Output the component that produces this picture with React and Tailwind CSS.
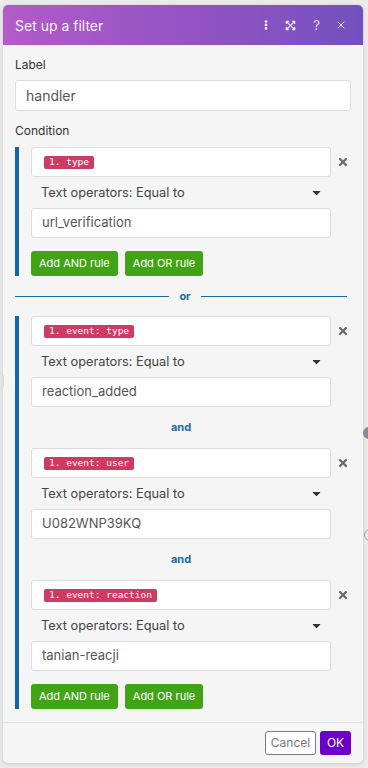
import React from "react";
import { FaEllipsisV, FaExpandArrowsAlt, FaTimes, FaCaretDown } from "react-icons/fa";
import { X } from "lucide-react";

function Tag({ children }) {
  return (
    <span className="inline-flex items-center h-[13px] px-[5px] rounded-[2px] bg-[#cf3a63] text-white text-[9.5px] leading-none" style={{ fontFamily: '"DejaVu Sans Mono", monospace' }}>
      {children}
    </span>
  );
}

function Rule({ tag, value }) {
  return (
    <div className="flex flex-col">
      <div className="flex items-center">
        <div className="w-[300px] h-[30px] bg-white border border-[#dcdcdc] rounded-[3px] flex items-center pl-[12px]">
          <Tag>{tag}</Tag>
        </div>
        <div className="flex-1 flex justify-end pr-[2px] text-[#6b6b6b]">
          <FaTimes size={12} />
        </div>
      </div>
      <div className="w-[300px] h-[31px] flex items-center justify-between pl-[10px] pr-[8px] text-[12.8px] text-[#444]">
        <span>Text operators: Equal to</span>
        <FaCaretDown size={13} className="text-[#333]" />
      </div>
      <div className="w-[300px] h-[30px] bg-white border border-[#dcdcdc] rounded-[3px] flex items-center pl-[10px] text-[13px] text-[#555]">
        {value}
      </div>
    </div>
  );
}

function And() {
  return (
    <div className="w-[300px] h-[41px] flex items-center justify-center text-[11px] font-bold text-[#1b6aa8]">and</div>
  );
}

function Buttons() {
  return (
    <div className="flex gap-[7px] mt-[13px]">
      <button className="h-[25px] px-[8px] rounded-[3px] bg-[#41a316] text-white text-[11px]">Add AND rule</button>
      <button className="h-[25px] px-[8px] rounded-[3px] bg-[#41a316] text-white text-[11px]">Add OR rule</button>
    </div>
  );
}

export default function App() {
  return (
    <div className="relative w-[368px] h-[768px] bg-[#ebebeb] overflow-hidden" style={{ fontFamily: 'Inter, "Noto Sans", sans-serif' }}>
      <div className="absolute left-[-6px] top-[372px] w-[10px] h-[18px] rounded-full border border-[#d6e6bc]" />
      <div className="absolute left-[363px] top-[427px] w-[12px] h-[12px] rounded-full bg-[#8c8696]" />
      <div className="absolute left-[364px] top-[529px] w-[12px] h-[12px] rounded-full border border-[#a0a0a0]" />
      <div className="ml-[3px] pt-[5px]">
        <div className="w-[360px] bg-[#f5f5f5] rounded-[5px] overflow-hidden shadow-[0_1px_4px_rgba(0,0,0,0.15)]">
          <div className="h-[40px] flex items-center justify-between pl-[12px] pr-[16px] bg-gradient-to-r from-[#b25bc9] via-[#9553c4] to-[#7350be] text-white">
            <span className="text-[14px] text-white/95">Set up a filter</span>
            <div className="flex items-center text-white/85">
              <FaEllipsisV size={10} />
              <span className="ml-[14px]"><FaExpandArrowsAlt size={11} /></span>
              <span className="ml-[17px] text-[13px] leading-none">?</span>
              <span className="ml-[15px]"><X size={12} strokeWidth={2} /></span>
            </div>
          </div>
          <div className="px-[12px] pt-[12px] pb-[13px]">
            <div className="text-[12px] leading-4 text-[#333]">Label</div>
            <div className="mt-[7px] h-[31px] bg-white border border-[#dcdcdc] rounded-[3px] flex items-center pl-[10px] text-[14px] text-[#555]">handler</div>
            <div className="mt-[12px] text-[12px] leading-4 text-[#333]">Condition</div>
            <div className="mt-[8px] border-l-4 border-[#1465a6] pl-[12px]">
              <Rule tag="1. type" value="url_verification" />
              <Buttons />
            </div>
            <div className="h-[40px] flex items-center">
              <div className="w-[154px] h-px bg-[#1b6aa8]" />
              <span className="w-[32px] text-center text-[11px] font-bold text-[#1b6aa8]">or</span>
              <div className="flex-1 mr-[4px] h-px bg-[#1b6aa8]" />
            </div>
            <div className="border-l-4 border-[#1465a6] pl-[12px]">
              <Rule tag="1. event: type" value="reaction_added" />
              <And />
              <Rule tag="1. event: user" value="U082WNP39KQ" />
              <And />
              <Rule tag="1. event: reaction" value="tanian-reacji" />
              <Buttons />
            </div>
          </div>
          <div className="border-t border-[#e2e2e2] flex justify-end gap-[4px] pt-[8px] pb-[8px] pr-[12px]">
            <button className="h-[24px] w-[51px] bg-white border border-[#7a7a7a] rounded-[3px] text-[12px] text-[#777]">Cancel</button>
            <button className="h-[24px] w-[31px] bg-[#6b00c8] rounded-[3px] text-[12px] text-white">OK</button>
          </div>
        </div>
      </div>
    </div>
  );
}
